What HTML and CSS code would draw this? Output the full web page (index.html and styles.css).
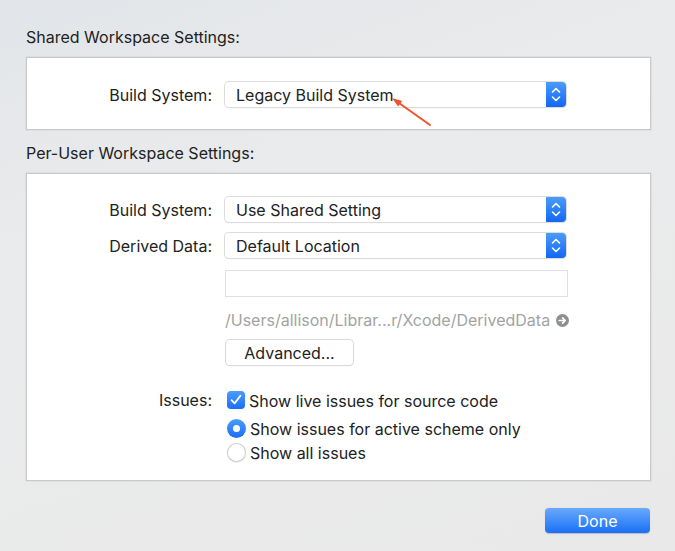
FILE: index.html
```html
<!DOCTYPE html>
<html lang="en">
<head>
<meta charset="utf-8">
<title>Workspace Settings</title>
<link rel="stylesheet" href="styles.css">
</head>
<body>
<div class="window">
  <h2 class="section-title">Shared Workspace Settings:</h2>
  <div class="box box-shared">
    <div class="row">
      <span class="label">Build System:</span>
      <div class="popup">
        <span class="popup-text">Legacy Build System</span>
        <span class="stepper"><svg width="20" height="25" viewBox="0 0 20 25"><path d="M6.5 10 L10 6.5 L13.5 10 M6.5 15 L10 18.5 L13.5 15" fill="none" stroke="#fff" stroke-width="1.6" stroke-linecap="round" stroke-linejoin="round"/></svg></span>
      </div>
    </div>
  </div>
  <svg class="annotation" width="50" height="40" viewBox="0 0 50 40"><line x1="14" y1="11" x2="45" y2="33" stroke="#f4522b" stroke-width="2" stroke-linecap="round"/><polygon points="7,6 13.1,14.6 17.2,8.9" fill="#f4522b"/></svg>

  <h2 class="section-title second">Per-User Workspace Settings:</h2>
  <div class="box box-user">
    <div class="row">
      <span class="label">Build System:</span>
      <div class="popup">
        <span class="popup-text">Use Shared Setting</span>
        <span class="stepper"><svg width="20" height="25" viewBox="0 0 20 25"><path d="M6.5 10 L10 6.5 L13.5 10 M6.5 15 L10 18.5 L13.5 15" fill="none" stroke="#fff" stroke-width="1.6" stroke-linecap="round" stroke-linejoin="round"/></svg></span>
      </div>
    </div>
    <div class="row gap-11">
      <span class="label">Derived Data:</span>
      <div class="popup">
        <span class="popup-text">Default Location</span>
        <span class="stepper"><svg width="20" height="25" viewBox="0 0 20 25"><path d="M6.5 10 L10 6.5 L13.5 10 M6.5 15 L10 18.5 L13.5 15" fill="none" stroke="#fff" stroke-width="1.6" stroke-linecap="round" stroke-linejoin="round"/></svg></span>
      </div>
    </div>
    <div class="row gap-12">
      <span class="label"></span>
      <div class="textfield"></div>
    </div>
    <div class="row gap-13">
      <span class="label"></span>
      <div class="path">
        <span class="path-text">/Users/allison/Librar...r/Xcode/DerivedData</span>
        <svg class="go-icon" width="13" height="13" viewBox="0 0 13 13"><circle cx="6.5" cy="6.5" r="6.5" fill="#8f8f8f"/><path d="M3.2 6.5 H9 M6.6 3.9 L9.2 6.5 L6.6 9.1" fill="none" stroke="#fff" stroke-width="1.7" stroke-linecap="round" stroke-linejoin="round"/></svg>
      </div>
    </div>
    <div class="row gap-10">
      <span class="label"></span>
      <button class="button">Advanced...</button>
    </div>
    <div class="row gap-25 check-row">
      <span class="label">Issues:</span>
      <span class="checkbox"><svg width="18" height="18" viewBox="0 0 18 18"><path d="M4.5 9.2 L7.6 12.4 L13.4 4.8" fill="none" stroke="#fff" stroke-width="1.8" stroke-linecap="round" stroke-linejoin="round"/></svg></span>
      <span class="option-text">Show live issues for source code</span>
    </div>
    <div class="row gap-8 check-row">
      <span class="label"></span>
      <span class="radio checked"><span class="dot"></span></span>
      <span class="option-text">Show issues for active scheme only</span>
    </div>
    <div class="row gap-4 check-row">
      <span class="label"></span>
      <span class="radio"></span>
      <span class="option-text">Show all issues</span>
    </div>
  </div>
  <div class="footer">
    <button class="done">Done</button>
  </div>
</div>
</body>
</html>
```

FILE: styles.css
```css
* { box-sizing: border-box; }
html, body {
  margin: 0;
  padding: 0;
  width: 675px;
  height: 551px;
  overflow: hidden;
}
body {
  background: linear-gradient(160deg, #e2e5e9 0%, #eaebec 35%, #e9e9e9 100%);
  font-family: Inter, "Liberation Sans", sans-serif;
  font-size: 16px;
  color: #222;
}
.window {
  position: relative;
  padding: 28px 24px 0 26px;
}
.section-title {
  margin: 0 0 11px 0;
  font-size: 16px;
  font-weight: 400;
  line-height: 18px;
  color: #222;
}
.section-title.second { margin-top: 14px; }
.box {
  background: #fff;
  border: 1px solid #c9c9c9;
  box-shadow: 0 0 0 0.5px #d6d6d6;
}
.box-shared { padding: 24px 0 22px 0; }
.box-user { padding: 23px 0 18px 0; }
.row {
  display: flex;
  align-items: center;
}
.gap-4 { margin-top: 4px; }
.gap-8 { margin-top: 8px; }
.gap-10 { margin-top: 10px; }
.gap-11 { margin-top: 11px; }
.gap-12 { margin-top: 12px; }
.gap-13 { margin-top: 13px; }
.gap-25 { margin-top: 25px; }
.label {
  width: 185px;
  flex: none;
  margin-right: 13px;
  text-align: right;
  line-height: 20px;
}
.popup {
  width: 341px;
  height: 25px;
  display: flex;
  align-items: center;
  background: #fff;
  border-radius: 4px;
  box-shadow: 0 0 0 1px #dcdcdc, 0 1px 1px rgba(0,0,0,0.18);
  overflow: hidden;
}
.popup-text {
  flex: 1;
  padding-left: 11px;
  line-height: 25px;
  padding-top: 1px;
  white-space: nowrap;
}
.stepper {
  width: 20px;
  height: 25px;
  flex: none;
  background: linear-gradient(#4a9cfc, #1466f3);
  display: block;
}
.stepper svg { display: block; }
.textfield {
  width: 343px;
  height: 27px;
  background: #fff;
  border: 1px solid #e0e0e0;
}
.path {
  display: flex;
  align-items: center;
  height: 20px;
}
.path-text {
  color: #a3a3a3;
  white-space: nowrap;
}
.go-icon {
  margin-left: 6px;
  display: block;
}
.button {
  font-family: inherit;
  font-size: 16px;
  color: #222;
  width: 127px;
  height: 25px;
  margin-left: 1px;
  background: #fff;
  border: none;
  border-radius: 4px;
  box-shadow: 0 0 0 1px #dadada, 0 1px 1px rgba(0,0,0,0.18);
  padding: 0;
}
.check-row { height: 20px; }
.checkbox {
  width: 18px;
  height: 18px;
  flex: none;
  margin-left: 2px;
  border-radius: 4px;
  background: linear-gradient(#4b9dfc, #1a6ef5);
}
.checkbox svg { display: block; }
.radio {
  width: 19px;
  height: 19px;
  flex: none;
  margin-left: 2px;
  border-radius: 50%;
  background: #fff;
  box-shadow: inset 0 0 0 1px #cbcbcb, 0 0.5px 1px rgba(0,0,0,0.15);
  display: flex;
  align-items: center;
  justify-content: center;
}
.radio.checked {
  background: linear-gradient(#4b9dfc, #1a6ef5);
  box-shadow: none;
}
.radio .dot {
  width: 7px;
  height: 7px;
  border-radius: 50%;
  background: #fff;
}
.option-text {
  margin-left: 4px;
  line-height: 20px;
  padding-top: 2px;
  white-space: nowrap;
}
.footer {
  display: flex;
  justify-content: flex-end;
  margin-top: 27px;
  padding-right: 1px;
}
.done {
  width: 105px;
  height: 25px;
  font-family: inherit;
  font-size: 16px;
  color: #fff;
  border: none;
  border-radius: 4px;
  background: linear-gradient(#6aa9fb, #1970f6);
  box-shadow: 0 0.5px 1px rgba(0,0,0,0.2);
  padding: 0;
}
.annotation {
  position: absolute;
  left: 385px;
  top: 92px;
}
```
